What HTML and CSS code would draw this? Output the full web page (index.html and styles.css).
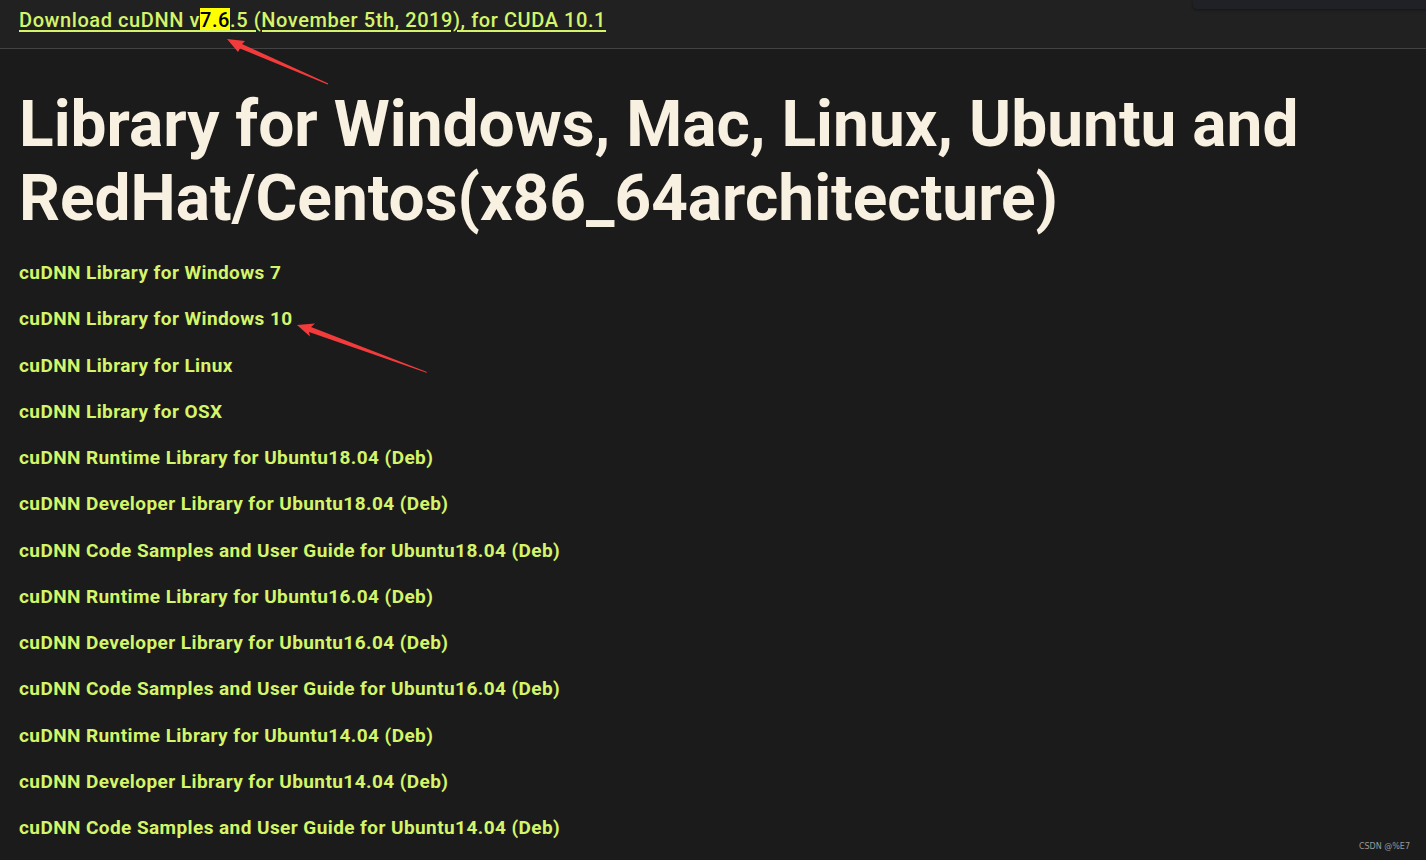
FILE: index.html
```html
<!DOCTYPE html>
<html lang="en">
<head>
    <meta charset="UTF-8">
    <title>cuDNN Archive</title>
    <link rel="stylesheet" href="styles.css">
</head>
<body>
    <div class="topbar">
        <a class="release-link" href="#">Download cuDNN v<mark class="hl">7.6</mark>.5 (November 5th, 2019), for CUDA 10.1</a>
        <div class="corner-panel"></div>
    </div>

    <div class="content">
        <h1 class="title">Library for Windows, Mac, Linux, Ubuntu and RedHat/Centos(x86_64architecture)</h1>

        <ul class="downloads">
            <li><a href="#">cuDNN Library for Windows 7</a></li>
            <li><a href="#">cuDNN Library for Windows 10</a></li>
            <li><a href="#">cuDNN Library for Linux</a></li>
            <li><a href="#">cuDNN Library for OSX</a></li>
            <li><a href="#">cuDNN Runtime Library for Ubuntu18.04 (Deb)</a></li>
            <li><a href="#">cuDNN Developer Library for Ubuntu18.04 (Deb)</a></li>
            <li><a href="#">cuDNN Code Samples and User Guide for Ubuntu18.04 (Deb)</a></li>
            <li><a href="#">cuDNN Runtime Library for Ubuntu16.04 (Deb)</a></li>
            <li><a href="#">cuDNN Developer Library for Ubuntu16.04 (Deb)</a></li>
            <li><a href="#">cuDNN Code Samples and User Guide for Ubuntu16.04 (Deb)</a></li>
            <li><a href="#">cuDNN Runtime Library for Ubuntu14.04 (Deb)</a></li>
            <li><a href="#">cuDNN Developer Library for Ubuntu14.04 (Deb)</a></li>
            <li><a href="#">cuDNN Code Samples and User Guide for Ubuntu14.04 (Deb)</a></li>
        </ul>
    </div>

    <!-- annotation arrows drawn over the screenshot -->
    <svg class="annotations" width="1426" height="860" viewBox="0 0 1426 860">
        <polygon points="227,39 245,41 242,44 328.3,83.6 327.7,84.4 240,48.5 238,52" fill="#f33b3b"/>
        <polygon points="297,325 315,323.5 311,327 427,372 426.5,372.8 309,332 310,336.5" fill="#f33b3b"/>
    </svg>

    <div class="watermark">CSDN @%E7</div>
</body>
</html>
```

FILE: styles.css
```css
* {
    margin: 0;
    padding: 0;
    box-sizing: border-box;
}

body {
    font-family: Roboto, 'Liberation Sans', sans-serif;
    background: #1b1b1b;
    color: #f8f1e2;
    width: 1426px;
    height: 860px;
    overflow: hidden;
    position: relative;
}

.topbar {
    height: 49px;
    background: #212121;
    border-bottom: 1px solid #434343;
    padding: 8px 19px 0;
    position: relative;
}

.release-link {
    color: #d4f56a;
    font-size: 20px;
    font-weight: 500;
    letter-spacing: 0.58px;
    text-decoration: underline;
    text-underline-offset: 3px;
}

.hl {
    background: #ffff00;
    color: #000;
}

.corner-panel {
    position: absolute;
    top: 0;
    right: 0;
    width: 233px;
    height: 9px;
    background: #202127;
    border-bottom-left-radius: 4px;
    box-shadow: 0 1px 3px rgba(0,0,0,0.4);
}

.content {
    padding: 39px 19px 0;
}

.title {
    font-size: 64px;
    font-weight: 700;
    line-height: 74px;
    color: #f8f1e2;
}

.downloads {
    list-style: none;
    margin-top: 14px;
}

.downloads li {
    height: 46.25px;
    line-height: 46.25px;
}

.downloads a {
    color: #d4f56a;
    font-size: 19px;
    font-weight: 700;
    letter-spacing: 0.42px;
    text-decoration: none;
}

.annotations {
    position: absolute;
    top: 0;
    left: 0;
    pointer-events: none;
}

.watermark {
    position: absolute;
    right: 16px;
    bottom: 9px;
    font-family: 'DejaVu Sans', sans-serif;
    font-size: 8px;
    color: #9a9a9a;
}
```
